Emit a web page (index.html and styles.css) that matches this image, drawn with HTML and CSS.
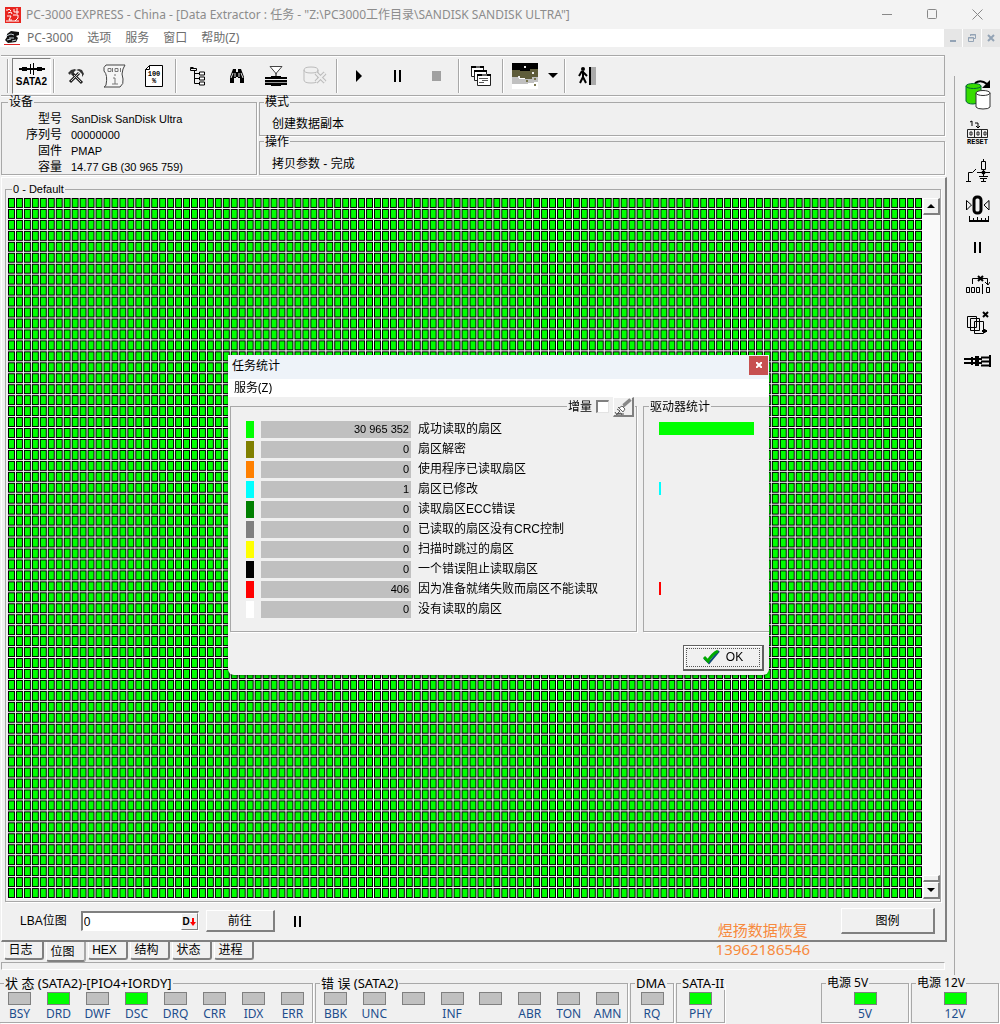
FILE: index.html
```html
<!DOCTYPE html>
<html lang="zh-CN">
<head>
    <meta charset="UTF-8">
    <meta name="viewport" content="width=device-width, initial-scale=1.0">
    <title>PC-3000 EXPRESS</title>
    <link rel="stylesheet" href="styles.css">
</head>
<body>
    <header class="titlebar">
        <svg class="logo" width="16" height="16" viewBox="0 0 16 16">
            <rect width="16" height="16" fill="#e8251f"/>
            <path d="M1 3h2l1-1 2 2M3 6l3-1 1 2M9 2v3h5M12 1v6M2 9h4l-2 4h3M1 14h13M8 8h5v3l-3 3" fill="none" stroke="#fff"/>
        </svg>
        <h1>PC-3000 EXPRESS - China - [Data Extractor : 任务 - "Z:\PC3000工作目录\SANDISK SANDISK ULTRA"]</h1>
        <div class="window-controls">
            <button aria-label="最小化"><svg width="11" height="11"><path d="M0 5.500h10"/></svg></button>
            <button aria-label="最大化"><svg width="11" height="11"><rect x=".5" y=".5" width="9" height="9" rx="1"/></svg></button>
            <button aria-label="关闭"><svg width="11" height="11"><path d="M.5 .5l10 10M10.500 .5l-10 10"/></svg></button>
        </div>
    </header>

    <nav class="menubar">
        <svg class="logo" width="16" height="16" viewBox="0 0 16 16">
            <path d="M3 4l4-3 8 1v3l-3 1 2 2-2 4-8 1-3-3 2-3z" fill="#111"/>
            <path d="M2 6l5-2 3 1M5 8h5M3 10l4-1M8 11l4-1" fill="none" stroke="#c4cfd6"/>
            <path d="M0 14.500h16" stroke="#d22"/>
        </svg>
        <button>PC-3000</button>
        <button>选项</button>
        <button>服务</button>
        <button>窗口</button>
        <button>帮助(Z)</button>
        <div class="mdi-controls">
            <button aria-label="最小化窗口"><svg width="10" height="10"><path d="M2 8h6" stroke-width="2"/></svg></button>
            <button aria-label="还原窗口"><svg width="10" height="10"><path d="M3.500 3V1.500h5v4H7M3 2h6M1.500 4.500h5v4h-5zM1 5h6"/></svg></button>
            <button aria-label="关闭窗口"><svg width="10" height="10"><path d="M2 2l6 6M8 2L2 8" stroke-width="2"/></svg></button>
        </div>
    </nav>

    <div class="workspace">
        <main class="main">
            <div class="toolbar">
                <span class="grip"></span>
                <button class="pressed" aria-label="SATA2">
                    <svg width="26" height="12" viewBox="0 0 26 12"><path d="M0 6h26" stroke="#000" stroke-width="2"/><path d="M3 6h5M18 6h5" stroke="#000" stroke-width="4"/><path d="M11.500 1v10M14.500 0v12" stroke="#000"/><path d="M13 2v3M13 7v3" stroke="#fff"/></svg>
                    <b>SATA2</b>
                </button>
                <span class="sep"></span>
                <button aria-label="工具">
                    <svg width="18" height="18" viewBox="0 0 18 18"><path d="M3 15L12 6M5 6l10 10" stroke="#222" stroke-width="3"/><path d="M4 14l8-8M7 8l7 7" stroke="#ccc"/><path d="M1 6l3-3 4-1 1 1-2 2-1 3-2-2-1 2zM9 3l3-1 3 1 2 4-2 3v-3l-3-3z" fill="#333"/></svg>
                </button>
                <button aria-label="信息">
                    <svg width="24" height="24" viewBox="0 0 24 24"><path d="M3 1q-3 2-2 6 4 4 2 14-1 2-2 2h16q4-3 3-8-2-5 0-10l2-4z" fill="#f6f6f6" stroke="#444"/><path d="M5 4.500h3v3H5zM9.500 4v4M12 4.500h3v3h-3zM17.500 4v4M11 11h2M10 14h2v6M9 20h6" fill="none" stroke="#777"/></svg>
                </button>
                <button aria-label="进度">
                    <svg class="percent" width="20" height="24" viewBox="0 0 20 24"><path d="M5.500 1.500h13v21h-17v-17z" fill="#fff" stroke="#000"/><path d="M1.500 5.500h4v-4" fill="none" stroke="#000"/><text x="10" y="12">100</text><text x="10" y="19">%</text></svg>
                </button>
                <span class="sep"></span>
                <button aria-label="结构树">
                    <svg width="18" height="22" viewBox="0 0 18 22"><path d="M1.500 3.500h6V5.500h-6zM1.500 3.500v-1h3M5.500 6v12.500H10M6 8.500h4M6 13.500h4" fill="none" stroke="#000"/><path d="M10.500 7h5v3h-5zM10.500 12h5v3h-5zM10.500 17h5v3h-5z" fill="#fff" stroke="#000"/></svg>
                </button>
                <button aria-label="查找">
                    <svg width="16" height="16" viewBox="0 0 16 16"><path d="M4 1h3v3h2V1h3l3 8v6h-4v-5H9V9H7v1H5v5H1V9z" fill="#000"/><path d="M4 5l-2 5M6 5v4M12 5l2 5M10 5v4" stroke="#ddd"/></svg>
                </button>
                <button aria-label="过滤器">
                    <svg width="24" height="22" viewBox="0 0 24 22"><path d="M6 1.500h12l-6 7z" fill="#fff" stroke="#444"/><path d="M12 8v3" stroke="#000"/><path d="M7 13v-2h10v2zM7 19h10v2H7z"/><path d="M1 13h22M1 16h22M1 19h22" stroke="#000" stroke-width="2"/><path d="M1 17.500h22" stroke="#999"/></svg>
                </button>
                <button aria-label="清除数据库" disabled>
                    <svg width="24" height="20" viewBox="0 0 24 20"><path d="M1 4q0-3 7-3t7 3v10q0 3-7 3t-7-3zM1 4q0 3 7 3t7-3" fill="none" stroke="#bbb"/><path d="M13 7l9 9M22 7l-9 9" stroke="#bbb" stroke-width="4"/><path d="M13 7l9 9M22 7l-9 9" stroke="#eee" stroke-width="2"/></svg>
                </button>
                <span class="sep"></span>
                <button aria-label="开始"><svg width="12" height="12"><path d="M3 0l6 6-6 6z"/></svg></button>
                <button aria-label="暂停"><svg width="12" height="12"><path d="M2 0h2v12H2zM7 0h2v12H7z"/></svg></button>
                <button aria-label="停止" disabled><svg width="12" height="12"><path d="M1 1h9v10H1z" fill="#a0a0a0"/></svg></button>
                <span class="sep"></span>
                <button aria-label="窗口">
                    <svg width="20" height="22" viewBox="0 0 20 22"><g fill="#fff" stroke="#222"><path d="M.5 1.500h12v10H.5z"/><path d="M3.500 5.500h12v10h-12z"/><path d="M6.500 9.500h13v11h-13z"/></g><path d="M0 2h13M3 6h13M6 10h14" stroke="#000" stroke-width="2"/><path d="M11 10h5M5 2h4" stroke="#ccc"/><path d="M8 13.500h9M11 15.500h6M8 17.500h5" stroke="#555"/></svg>
                </button>
                <span class="sep"></span>
                <button aria-label="位图颜色">
                    <svg width="26" height="26" viewBox="0 0 26 26"><path d="M0 0h26v26H0z" fill="#fff"/><path d="M0 0h26v8H0z"/><path d="M0 7h8v1h10V6h8v8h-6v2h-7v-1H0z" fill="#5e5c3a"/><path d="M0 14h7v2h13v-2h6v5h-4v1h-6v1H0z" fill="#c0c0c0"/><path d="M12 3h2v2h-2zM20 9h2v2h-2zM6 13h2v2H6z" fill="#eee"/><path d="M14 17h2v2h-2zM22 15h2v2h-2zM22 21h2v2h-2z" fill="#77754e"/></svg>
                </button>
                <button class="narrow" aria-label="更多"><svg width="10" height="5"><path d="M0 0h10L5 5z"/></svg></button>
                <span class="sep"></span>
                <button aria-label="退出">
                    <svg width="20" height="20" viewBox="0 0 20 20"><path d="M12 1h2v18h-2z"/><path d="M14 1h5v18h-5z" fill="#aaa"/><circle cx="6" cy="3" r="2"/><path d="M5 5l-3 5M6 5v6l3 6M6 11l-3 6M6 6l4 4" fill="none" stroke="#000" stroke-width="2"/></svg>
                </button>
            </div>

            <div class="info">
                <fieldset class="device">
                    <legend>设备</legend>
                    <dl>
                        <dt>型号</dt><dd>SanDisk SanDisk Ultra</dd>
                        <dt>序列号</dt><dd>00000000</dd>
                        <dt>固件</dt><dd>PMAP</dd>
                        <dt>容量</dt><dd>14.77 GB (30 965 759)</dd>
                    </dl>
                </fieldset>
                <div class="info-right">
                    <fieldset><legend>模式</legend><p>创建数据副本</p></fieldset>
                    <fieldset><legend>操作</legend><p>拷贝参数 - 完成</p></fieldset>
                </div>
            </div>

            <section class="panel">
                <fieldset class="map">
                    <legend>0 - Default</legend>
                    <div class="map-body">
                        <!-- 115 x 64 sectors -->
                        <svg class="sectors" viewBox="0 0 920 704" preserveAspectRatio="none">
                            <defs>
                                <pattern id="sector" width="8" height="11" patternUnits="userSpaceOnUse">
                                    <rect width="8" height="11" fill="#fff"/>
                                    <rect width="7" height="10" fill="#000"/>
                                    <rect x="1" y="1" width="5" height="8" fill="#0f0"/>
                                </pattern>
                            </defs>
                            <rect width="920" height="704" fill="url(#sector)"/>
                        </svg>
                        <div class="scrollbar">
                            <button aria-label="向上"><svg width="8" height="4"><path d="M0 4l4-4 4 4z"/></svg></button>
                            <span class="thumb"></span>
                            <button aria-label="向下"><svg width="8" height="4"><path d="M0 0h8L4 4z"/></svg></button>
                        </div>
                    </div>
                </fieldset>
                <div class="goto">
                    <label for="lba">LBA位图</label>
                    <div class="lba-box">
                        <input id="lba" type="text" value="0">
                        <button aria-label="十进制"><b>D</b><svg width="6" height="8"><path d="M2 0h2v4h2L3 8 0 4h2z" fill="#f00"/></svg></button>
                    </div>
                    <button class="btn">前往</button>
                    <button class="plain" aria-label="暂停"><svg width="8" height="11"><path d="M0 0h2v11H0zM5 0h2v11H5z"/></svg></button>
                    <button class="btn legend-btn">图例</button>
                </div>
            </section>

            <div class="tabs" role="tablist">
                <button role="tab">日志</button>
                <button role="tab" class="active" aria-selected="true">位图</button>
                <button role="tab">HEX</button>
                <button role="tab">结构</button>
                <button role="tab">状态</button>
                <button role="tab">进程</button>
            </div>
            <div class="strip"></div>
        </main>

        <aside class="sidebar">
            <button aria-label="复制">
                <svg width="26" height="30" viewBox="0 0 26 30"><path d="M1 6v15q1 3 7 3t8-3V6" fill="#37dc00" stroke="#063"/><ellipse cx="8.500" cy="6" rx="7.500" ry="2.500" fill="#37dc00" stroke="#063"/><path d="M11 13v14q1 2 7 2t7-2V13" fill="#fff" stroke="#333"/><ellipse cx="18" cy="13" rx="7" ry="2.500" fill="#fff" stroke="#333"/><path d="M10 3q6-4 12 1" fill="none" stroke="#000" stroke-width="2"/><path d="M25 0v8h-8z"/></svg>
            </button>
            <button aria-label="复位">
                <svg width="22" height="18" viewBox="0 0 22 18"><path d="M3 2l2-1v5M8 3h3v5M9 6l2 2 2-2" fill="none" stroke="#000"/><path d="M.5 9.500h20v8H.5zM7.500 9v9M14.500 9v9M3 12h2v3H3zM10 12h2v3h-2zM17 12h2v3h-2z" fill="none" stroke="#222"/></svg>
                <b>RESET</b>
            </button>
            <button aria-label="电源">
                <svg width="26" height="24" viewBox="0 0 26 24"><path d="M1 22.500h5M3.500 22V13.500h4L11 10M12 13.500h13M18.500 0v3M18.500 11v6M14 17.500h9M15 19.500h7M18.500 20v3M16 22.500h5M16.500 2.500h4v8h-4z" fill="none" stroke="#000"/><circle cx="18.500" cy="13.500" r="2"/></svg>
            </button>
            <button aria-label="零位">
                <svg width="26" height="28" viewBox="0 0 26 28"><rect x="9" y="2" width="7" height="16" rx="3" fill="none" stroke="#000" stroke-width="3"/><path d="M1.500 5.500l5 4.500-5 5zM24 5.500l-5 4.500 5 5zM4.500 21v5M23.500 21v5M8.500 23v3M12.500 22v4M16.500 23v3M20.500 23v3" fill="none" stroke="#000"/><path d="M4 26h20" stroke="#000" stroke-width="2"/></svg>
            </button>
            <button aria-label="暂停"><svg width="8" height="11"><path d="M0 0h2v11H0zM5 0h2v11H5z"/></svg></button>
            <button aria-label="移除">
                <svg width="24" height="20" viewBox="0 0 24 20"><path d="M6.500 9V3.500h15V9M19 7l3 3 2-3M.5 12.500h3v5h-3zM5.500 12.500h3v5h-3zM10.500 12.500h3v5h-3zM16.500 9v10M20.500 12.500h3v5h-3z" fill="none" stroke="#000"/><path d="M12 1l5 5M17 1l-5 5" stroke="#000" stroke-width="2"/></svg>
            </button>
            <button aria-label="删除副本">
                <svg width="24" height="24" viewBox="0 0 24 24"><path d="M1.500 5.500h9v11h-9zM4.500 7.500h9v12h-9zM8.500 10.500h9v12h-9z" fill="#f0f0f0" stroke="#000"/><path d="M16 20h5M18.500 18v4" stroke="#000" stroke-width="2"/><path d="M17 1l5 5M22 1l-5 5" stroke="#000" stroke-width="2"/></svg>
            </button>
            <button aria-label="连接">
                <svg width="28" height="14" viewBox="0 0 28 14"><path d="M0 5h18M0 9h18" stroke="#000" stroke-width="2"/><path d="M7 3h2v8H7zM11 2h4v10h-4z"/><path d="M17 3.500h9M17 7.500h9M17 11.500h9M26 1v12" stroke="#000" stroke-width="2"/></svg>
            </button>
        </aside>
    </div>

    <footer class="status">
        <fieldset class="leds">
            <legend>状 态 (SATA2)-[PIO4+IORDY]</legend>
            <span class="led">BSY</span>
            <span class="led on">DRD</span>
            <span class="led">DWF</span>
            <span class="led on">DSC</span>
            <span class="led">DRQ</span>
            <span class="led">CRR</span>
            <span class="led">IDX</span>
            <span class="led">ERR</span>
        </fieldset>
        <fieldset class="leds">
            <legend>错 误 (SATA2)</legend>
            <span class="led">BBK</span>
            <span class="led">UNC</span>
            <span class="led"></span>
            <span class="led">INF</span>
            <span class="led"></span>
            <span class="led">ABR</span>
            <span class="led">TON</span>
            <span class="led">AMN</span>
        </fieldset>
        <fieldset class="leds">
            <legend>DMA</legend>
            <span class="led">RQ</span>
        </fieldset>
        <fieldset class="leds">
            <legend>SATA-II</legend>
            <span class="led on">PHY</span>
        </fieldset>
        <fieldset class="leds power">
            <legend>电源 5V</legend>
            <span class="led on">5V</span>
        </fieldset>
        <fieldset class="leds">
            <legend>电源 12V</legend>
            <span class="led on">12V</span>
        </fieldset>
    </footer>

    <div class="watermark">煜扬数据恢复<br>13962186546</div>

    <div class="overlay">
        <div class="dialog" role="dialog" aria-labelledby="dialog-title">
            <div class="dialog-title">
                <h2 id="dialog-title">任务统计</h2>
                <button class="close" aria-label="关闭"><svg width="6" height="6"><path d="M0 0l6 6M6 0L0 6" stroke="#fff" stroke-width="2"/></svg></button>
            </div>
            <div class="dialog-menu"><button>服务(Z)</button></div>
            <div class="dialog-body">
                <fieldset class="stats">
                    <legend>
                        <label for="inc">增量</label>
                        <input id="inc" type="checkbox">
                        <button class="clear" aria-label="清除"><svg width="18" height="18" viewBox="0 0 18 18"><path d="M17 2l-8 7M16 1l-7 6" stroke="#888" stroke-width="2"/><path d="M8 8l3 3-2 3-4-4z" fill="#fff" stroke="#666"/><path d="M3 11l3 2-3 3 4-1 1 2M1 14l2 3M4 9l1 1M2 16h8" fill="none" stroke="#555"/></svg></button>
                    </legend>
                    <table>
                        <tr><td class="c-read"></td><td class="num">30 965 352</td><td>成功读取的扇区</td></tr>
                        <tr><td class="c-decoded"></td><td class="num">0</td><td>扇区解密</td></tr>
                        <tr><td class="c-soft"></td><td class="num">0</td><td>使用程序已读取扇区</td></tr>
                        <tr><td class="c-changed"></td><td class="num">1</td><td>扇区已修改</td></tr>
                        <tr><td class="c-ecc"></td><td class="num">0</td><td>读取扇区ECC错误</td></tr>
                        <tr><td class="c-crc"></td><td class="num">0</td><td>已读取的扇区没有CRC控制</td></tr>
                        <tr><td class="c-skipped"></td><td class="num">0</td><td>扫描时跳过的扇区</td></tr>
                        <tr><td class="c-blocked"></td><td class="num">0</td><td>一个错误阻止读取扇区</td></tr>
                        <tr><td class="c-notready"></td><td class="num">406</td><td>因为准备就绪失败而扇区不能读取</td></tr>
                        <tr><td class="c-unread"></td><td class="num">0</td><td>没有读取的扇区</td></tr>
                    </table>
                </fieldset>
                <fieldset class="drive">
                    <legend>驱动器统计</legend>
                    <div class="bars">
                        <span class="c-read" style="width: 100%"></span>
                        <span></span>
                        <span></span>
                        <span class="c-changed" style="width: 2%"></span>
                        <span></span>
                        <span></span>
                        <span></span>
                        <span></span>
                        <span class="c-notready" style="width: 2%"></span>
                        <span></span>
                    </div>
                </fieldset>
            </div>
            <div class="dialog-footer">
                <button class="ok"><span><svg width="17" height="16" viewBox="0 0 17 16"><path d="M1 9l5 5L16 2" fill="none" stroke="#124a7a" stroke-width="2"/><path d="M1 8l4 4q4-7 10-10" fill="none" stroke="#0a0" stroke-width="3"/></svg>OK</span></button>
            </div>
        </div>
    </div>
</body>
</html>
```
FILE: styles.css
```css
:root {
    --face: #f0f0f0;
    --line: #a8a8a8;
    --dark: #808080;
    --ui: "Noto Sans", "Noto Sans CJK SC", sans-serif;
    --classic: "Liberation Sans", "Noto Sans CJK SC", sans-serif;
}

* {
    margin: 0;
    padding: 0;
    box-sizing: border-box;
}

body {
    display: flex;
    flex-direction: column;
    height: 100vh;
    min-height: 640px;
    background: var(--face);
    color: #000;
    font: 12px/16px var(--classic);
    overflow: hidden;
}

button {
    border: 0;
    background: none;
    font: inherit;
    color: inherit;
}

svg {
    display: block;
    flex: none;
}

fieldset {
    min-width: 0;
    border: 1px solid var(--line);
    box-shadow: 1px 1px 0 #fff;
}

legend {
    padding: 0 1px;
}

/* Title bar and menu */
.titlebar {
    display: flex;
    align-items: center;
    flex: none;
    height: 29px;
    padding-left: 5px;
    background: #f3f3f3;
    color: #8c8c8c;
    font-family: var(--ui);
}

.titlebar h1 {
    flex: 1;
    margin-left: 5px;
    font-size: 12px;
    font-weight: normal;
    white-space: nowrap;
    overflow: hidden;
}

.window-controls {
    display: flex;
}

.window-controls button {
    display: flex;
    justify-content: center;
    align-items: center;
    width: 45px;
    height: 29px;
}

.window-controls svg {
    fill: none;
    stroke: #888;
}

.menubar {
    display: flex;
    align-items: center;
    flex: none;
    gap: 14px;
    height: 18px;
    padding-left: 4px;
    background: #fff;
    color: #6e6e6e;
    font-family: var(--ui);
    line-height: 18px;
}

.menubar .logo {
    margin-right: -7px;
}

.mdi-controls {
    display: flex;
    gap: 1px;
    margin-left: auto;
}

.mdi-controls button {
    display: flex;
    justify-content: center;
    align-items: center;
    width: 18px;
    height: 18px;
    background: #e6e6e6;
}

.mdi-controls svg {
    fill: none;
    stroke: #93a3b5;
}

/* Work area */
.workspace {
    display: flex;
    flex: 1;
    min-height: 0;
    padding-top: 8px;
}

.main {
    display: flex;
    flex-direction: column;
    flex: 1;
    min-width: 0;
    padding-left: 1px;
}

.toolbar {
    display: flex;
    align-items: center;
    flex: none;
    height: 41px;
    margin-right: 9px;
    padding-left: 5px;
    border: 1px solid var(--line);
    border-left: 0;
    box-shadow: inset 0 1px 0 #fff, 0 1px 0 #fff;
}

.toolbar button {
    display: flex;
    flex-direction: column;
    justify-content: center;
    align-items: center;
    flex: none;
    width: 39px;
    height: 36px;
}

.toolbar .narrow {
    width: 18px;
}

.toolbar .pressed {
    gap: 1px;
    border: 1px solid #fff;
    border-top-color: var(--dark);
    border-left-color: var(--dark);
    background: #f6f6f6;
}

.toolbar b {
    font: bold 10px/12px "Liberation Sans", sans-serif;
}

.percent text {
    font: bold 7px "Liberation Mono", monospace;
    text-anchor: middle;
}

.grip,
.sep {
    flex: none;
    width: 2px;
    height: 34px;
    margin: 0 1px 0 2px;
    border-left: 1px solid var(--line);
    border-right: 1px solid #fff;
}

.grip {
    margin: 0 3px 0 1px;
}

.info {
    display: flex;
    gap: 2px;
    flex: none;
    height: 79px;
    margin-right: 9px;
}

.info legend {
    line-height: 12px;
}

.device {
    width: 256px;
}

.device legend {
    margin-left: 6px;
}

.device dl {
    display: grid;
    grid-template-columns: 60px 1fr;
    column-gap: 9px;
    padding-top: 3px;
}

.device dt {
    text-align: right;
}

.device dd,
.num,
.map legend {
    font-size: 11px;
}

.info-right {
    display: flex;
    flex-direction: column;
    flex: 1;
    min-width: 0;
}

.info-right fieldset {
    flex: 1;
    padding: 8px 12px 0;
}

.info-right legend {
    margin-left: -8px;
}

.panel {
    display: flex;
    flex-direction: column;
    flex: 1;
    min-height: 0;
    margin: 2px 7px 0 0;
    padding: 3px 4px 0 3px;
    border: 1px solid #fff;
    border-right: 2px solid var(--dark);
    border-bottom: 2px solid var(--dark);
}

.map {
    display: flex;
    flex: 1;
    min-height: 0;
    padding: 1px 0 2px 2px;
}

.map legend {
    margin-left: 4px;
}

.map-body {
    display: flex;
    flex: 1;
    min-width: 0;
    min-height: 0;
}

.sectors {
    flex: 1;
    min-width: 0;
    height: 100%;
}

.scrollbar {
    display: flex;
    flex-direction: column;
    flex: none;
    width: 17px;
    background: #f9f9f9;
}

.scrollbar button,
.thumb,
.btn,
.clear {
    border: 1px solid #fff;
    border-right: 2px solid var(--dark);
    border-bottom: 2px solid var(--dark);
    background: var(--face);
}

.scrollbar button {
    display: flex;
    justify-content: center;
    align-items: center;
    height: 17px;
}

.thumb {
    height: 7px;
    margin-top: auto;
}

.goto {
    display: flex;
    align-items: center;
    flex: none;
    height: 38px;
    padding: 0 6px 0 15px;
}

.lba-box {
    display: flex;
    width: 118px;
    height: 20px;
    margin: 0 7px 0 14px;
    border: 2px solid var(--dark);
    border-right: 1px solid #fff;
    border-bottom: 1px solid #fff;
    background: #fff;
}

.lba-box input {
    flex: 1;
    min-width: 0;
    padding-left: 1px;
    border: 0;
    background: none;
    font: 12px var(--classic);
    outline: 0;
}

.lba-box button {
    display: flex;
    justify-content: center;
    align-items: center;
    width: 17px;
    border: 1px solid #fff;
    border-right-color: var(--dark);
    border-bottom-color: var(--dark);
    background: var(--face);
}

.lba-box b {
    font-size: 10px;
}

.btn {
    width: 69px;
    height: 22px;
}

.plain {
    margin-left: 19px;
}

.legend-btn {
    width: 94px;
    height: 26px;
    margin-left: auto;
}

.tabs {
    display: flex;
    align-items: flex-start;
    gap: 2px;
    flex: none;
    height: 20px;
    padding-left: 3px;
}

.tabs button {
    width: 40px;
    height: 18px;
    padding-right: 6px;
    border: 1px solid #fff;
    border-top: 0;
    border-right: 2px solid var(--dark);
    border-bottom: 2px solid var(--dark);
    border-radius: 0 0 3px 3px;
}

.tabs .active {
    height: 20px;
    padding-top: 2px;
    border-right-color: var(--line);
}

.strip {
    flex: none;
    height: 8px;
    margin-right: 9px;
    border: 1px solid #fff;
    border-top-color: var(--line);
    border-left-color: var(--line);
}

.sidebar {
    display: flex;
    flex-direction: column;
    flex: none;
    width: 46px;
    margin: 21px 0 -5px;
    border-left: 1px solid var(--line);
}

.sidebar button {
    display: flex;
    flex-direction: column;
    justify-content: center;
    align-items: center;
    height: 38px;
}

.sidebar b {
    font: bold 7px/8px "Liberation Mono", monospace;
}

/* Status LEDs */
.status {
    display: grid;
    grid-template-columns: 1fr 1fr 44px 49px 182px 88px;
    gap: 2px;
    flex: none;
    padding: 6px 1px 1px 0;
    font-family: var(--ui);
}

.leds {
    display: flex;
    height: 47px;
}

.leds legend {
    margin-left: 4px;
    height: 14px;
    font-size: 13px;
    line-height: 14px;
    white-space: nowrap;
}

.leds:first-child {
    border-left: 0;
}

.power {
    width: 88px;
    justify-self: end;
}

.power legend,
.power + .leds legend {
    font-size: 12px;
}

.led {
    flex: 1;
    color: #1d4d8c;
    line-height: 18px;
    text-align: center;
}

.led::before {
    content: "";
    display: block;
    width: 21px;
    height: 11px;
    margin: 2px auto 0;
    border: 1px solid var(--dark);
    background: #c0c0c0;
}

.led.on::before {
    background: #0f0;
}

.watermark {
    position: absolute;
    right: 190px;
    bottom: 65px;
    color: #f78a3d;
    font: 15px/19px var(--ui);
    text-align: center;
}

/* Statistics dialog */
.overlay {
    position: fixed;
    inset: 0;
    display: flex;
    justify-content: center;
    align-items: center;
    padding: 5px 3px 0 0;
}

.dialog {
    width: 541px;
    border-radius: 0 0 6px 6px;
    background: var(--face);
    box-shadow: 0 1px 3px rgba(0, 0, 0, 0.5);
    overflow: hidden;
}

.dialog-title {
    display: flex;
    justify-content: space-between;
    height: 24px;
    padding: 1px 1px 0 4px;
    background: #eef3f9;
}

.dialog-title h2 {
    font: 12px/20px var(--ui);
}

.close {
    display: flex;
    justify-content: center;
    align-items: center;
    width: 19px;
    height: 19px;
    background: #c75050;
}

.dialog-menu {
    height: 18px;
    padding-left: 6px;
    background: #fff;
    font: 12px/18px var(--ui);
}

.dialog-body {
    display: flex;
    gap: 6px;
    padding-left: 2px;
}

.stats {
    width: 407px;
    height: 235px;
    padding: 1px 0 0 8px;
}

.stats legend {
    display: flex;
    align-items: center;
    gap: 4px;
    height: 20px;
    margin-left: auto;
    margin-right: 1px;
}

.stats input {
    appearance: none;
    width: 13px;
    height: 13px;
    border: 1px solid #e3e3e3;
    border-top: 2px solid var(--dark);
    border-left: 2px solid var(--dark);
    background: #fff;
}

.clear {
    width: 21px;
    height: 20px;
}

.stats table {
    border-spacing: 7px 3px;
}

.stats td {
    height: 17px;
    line-height: 17px;
    white-space: nowrap;
}

.stats td:first-child {
    width: 8px;
}

.stats .num {
    width: 150px;
    padding-right: 2px;
    background: #c0c0c0;
    text-align: right;
}

.drive {
    flex: 1;
    margin-top: 2px;
    border-right: 0;
}

.drive legend {
    margin-left: 5px;
}

.bars {
    display: grid;
    grid-auto-rows: 13px;
    row-gap: 7px;
    width: 95px;
    margin: 7px 0 0 15px;
}

.c-read { background: #0f0; }
.c-decoded { background: #808000; }
.c-soft { background: #ff8000; }
.c-changed { background: #0ff; }
.c-ecc { background: #008000; }
.c-crc { background: #808080; }
.c-skipped { background: #ff0; }
.c-blocked { background: #000; }
.c-notready { background: #f00; }
.c-unread { background: #fff; }

.dialog-footer {
    display: flex;
    justify-content: flex-end;
    padding: 13px 5px 4px;
}

.ok {
    width: 81px;
    height: 26px;
    padding: 2px;
    border: 1px solid #606060;
    border-right-width: 2px;
    border-bottom-width: 2px;
    background: var(--face);
    box-shadow: inset 1px 1px 0 #fff;
}

.ok span {
    display: flex;
    justify-content: center;
    align-items: center;
    gap: 6px;
    height: 19px;
    border: 1px dotted #555;
}
```
